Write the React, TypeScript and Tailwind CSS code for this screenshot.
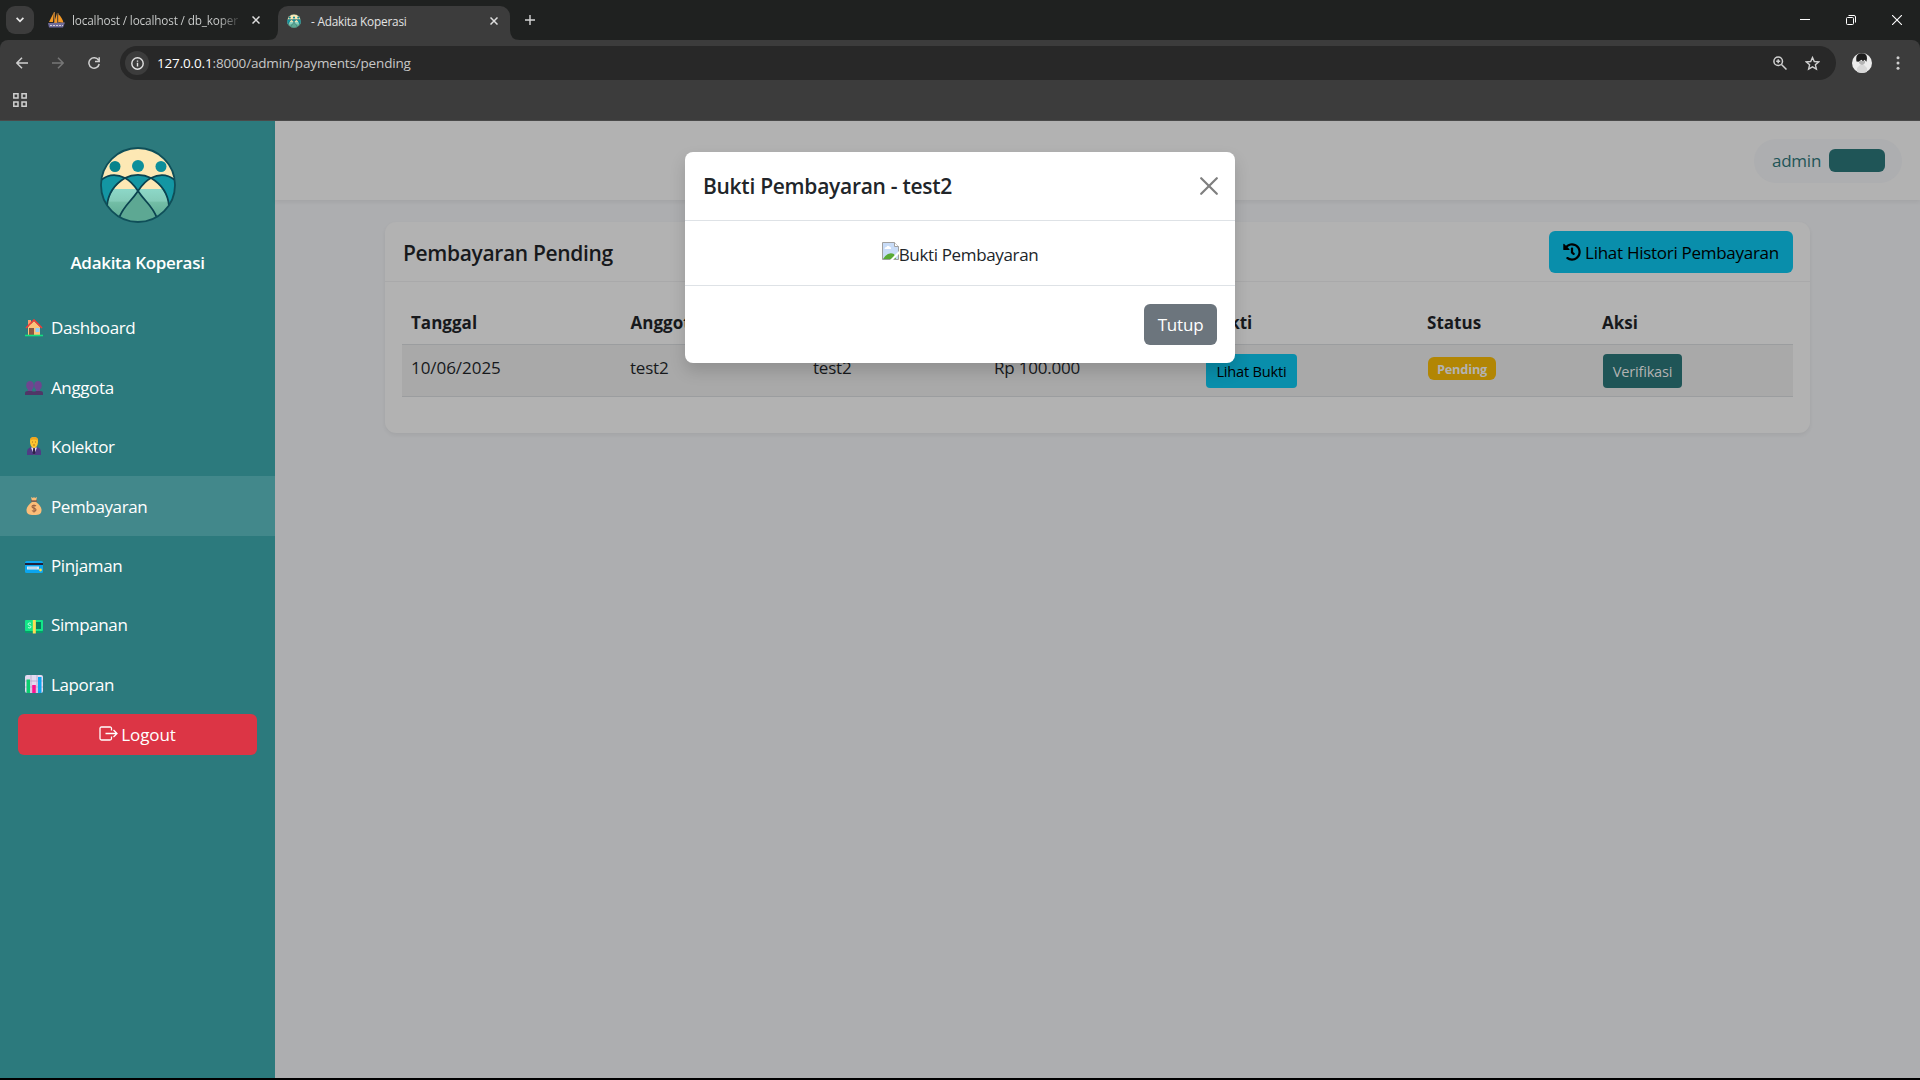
import React from "react";
import { FaHistory } from "react-icons/fa";

const columns = ["Tanggal", "Anggota", "Kolektor", "Jumlah", "Bukti", "Status", "Aksi"];

function Mark({ size }: { size: number }) {
  return (
    <svg width={size} height={size} viewBox="0 0 76 76" fill="none">
      <defs>
        <clipPath id={"disc" + size}><circle cx="38" cy="38" r="37" /></clipPath>
        <linearGradient id={"field" + size} x1="0" y1="0" x2="0" y2="1">
          <stop offset="0" stopColor="#8dd8c8" />
          <stop offset="0.35" stopColor="#84cbb8" />
          <stop offset="0.4" stopColor="#72bda5" />
          <stop offset="1" stopColor="#58a590" />
        </linearGradient>
      </defs>
      <g clipPath={`url(#disc${size})`}>
        <rect width="76" height="76" fill="#fde8b4" />
        <rect y="42" width="76" height="34" fill={`url(#field${size})`} />
        <path d="M0 33C8 27 17 27 25 31C15 38 9 47 7 58L0 54Z" fill="#1396a3" />
        <path d="M76 33C68 27 59 27 51 31C61 38 67 47 69 58L76 54Z" fill="#1396a3" />
        <path d="M25 31C33 27 43 27 51 31C46 34 41 39 38 44C35 39 30 34 25 31Z" fill="#1396a3" />
        <path d="M38 44C46 56 52 59 58 71L38 76L18 71C24 59 30 56 38 44Z" fill="#5da893" />
        <g stroke="#0b4350" strokeWidth="1.8">
          <path d="M0 34C9 26 17 27 25 31C31 34 34 38 38 44C46 56 52 58 57 71" />
          <path d="M76 34C67 26 59 27 51 31C45 34 42 38 38 44C30 56 24 58 19 71" />
          <path d="M7 59C8 46 15 37 25 31C33 27 43 27 51 31C61 37 68 46 69 59" />
        </g>
        <circle cx="15" cy="19.500" r="5.500" fill="#07838c" />
        <circle cx="38" cy="19" r="6" fill="#0d8f9b" />
        <circle cx="61" cy="19.500" r="5.500" fill="#0d8f9b" />
      </g>
      <circle cx="38" cy="38" r="37" stroke="#0f4f59" strokeWidth="1.800" />
    </svg>
  );
}

const emoji: Record<string, React.ReactNode> = {
  Dashboard: (
    <>
      <path d="M3 1h3v6H3z" fill="#f8a06b" />
      <path d="M3 8l6-6 6 6v8H3z" fill="#fcc27a" />
      <path d="M1 9l8-8 8 8" stroke="#f43b36" strokeWidth="1.600" fill="none" />
      <path d="M4 9h5v7H4z" fill="#8b5742" />
      <path d="M10.500 9h4v4h-4z" fill="#8fd0fb" />
      <path d="M0 16.500h18" stroke="#12e07f" strokeWidth="1.600" />
    </>
  ),
  Anggota: (
    <g fill="#6f4590">
      <ellipse cx="5" cy="7.500" rx="3.800" ry="4.500" />
      <ellipse cx="13" cy="7.500" rx="3.800" ry="4.500" />
      <path d="M3 10h4v4H3zM11 10h4v4h-4z" />
      <path d="M0 17v-2c0-2 2-2 5-2 2 0 3 .6 4 .6s2-.6 4-.6c3 0 5 0 5 2v2z" fill="#503667" />
    </g>
  ),
  Kolektor: (
    <>
      <path d="M2 18v-3c0-3 2-5 7-5s7 2 7 5v3z" fill="#503c86" />
      <path d="M6 10.500h6l-3 7.500z" fill="#e8e0f0" />
      <path d="M8.300 11h1.500l.7 5-1.500 2-1.500-2z" fill="#2d2248" />
      <path d="M5 4c0-3 1.500-4 4-4s4 1 4 4c0 4-1.500 7-4 7s-4-3-4-7z" fill="#fdc52e" />
      <path d="M5 3.500C5 1 6.500 0 9 0s4 1 4 3.500C10 2.500 8 2 5 3.500z" fill="#f0a51d" />
      <path d="M7 5h1M10 5h1M8 8h2" stroke="#9a5b20" strokeWidth=".8" />
    </>
  ),
  Pembayaran: (
    <>
      <path d="M6 0l2 1 1-1 1 1 2-1-1 4H7z" fill="#fcbd78" />
      <path d="M6 4h6" stroke="#8b5a45" strokeWidth="1.400" />
      <path d="M7 5h4c3 2 5.500 5 5.500 8 0 4-2 5-7.500 5s-7.500-1-7.500-5c0-3 2.500-6 5.500-8z" fill="#fcbd78" />
      <path d="M11 9c-1-1-4-1-4 .8 0 2 4 1 4 3 0 1.800-3 1.800-4 .7M9 7.500v8" stroke="#9b6242" strokeWidth="1.100" fill="none" />
    </>
  ),
  Pinjaman: (
    <>
      <rect y="5" width="18" height="12" rx="1.500" fill="#0ba5ef" />
      <path d="M0 7h18v2H0z" fill="#20203c" />
      <path d="M2 10.500h12v3H2z" fill="#d6eaf8" />
      <path d="M3 12h9" stroke="#9fb7d0" strokeWidth=".7" />
      <circle cx="15.500" cy="14" r="1.400" fill="#ffdf47" />
    </>
  ),
  Simpanan: (
    <>
      <rect y="4" width="18" height="13" rx="1" fill="#05a268" />
      <rect y="4" width="18" height="11" rx="1" fill="#12e688" />
      <path d="M11 6h5v7h-5z" fill="#077e5c" />
      <path d="M6 7.500C5 6.500 3 7 3 8.200 3 10 6 9 6 10.800c0 1.400-2 1.500-3 .6" stroke="#c9ffe4" fill="none" />
      <path d="M7.800 4h3v13.500h-3z" fill="#ffdd55" />
    </>
  ),
  Laporan: (
    <>
      <rect width="18" height="18" rx="2" fill="#e4daf0" />
      <path d="M0 6h18M0 12h18M6 0v18M12 0v18" stroke="#b7a9cc" strokeWidth=".8" />
      <path d="M1.500 4.500h3.500V18H1.500z" fill="#0ccf70" />
      <path d="M7.200 10h3.600v8H7.200z" fill="#fa1490" />
      <path d="M13 2h3.500v16H13z" fill="#0ca6f2" />
    </>
  ),
};

function X({ s = 8 }: { s?: number }) {
  return (
    <svg className="shrink-0" width={s} height={s} viewBox="0 0 8 8" stroke="#dedede" strokeWidth="1.500">
      <path d="M.5.5l7 7M7.500.5l-7 7" />
    </svg>
  );
}

function Browser() {
  return (
    <div className="h-[121px] shrink-0 bg-[#1f2120] font-['Open_Sans',sans-serif] text-[#e3e3e3]">
      <div className="flex h-10 items-end">
        <div className="mb-1.5 ml-1.5 flex h-7 w-7 shrink-0 items-center justify-center rounded-[9px] bg-[#3c3c3c]">
          <svg width="8" height="6" viewBox="0 0 8 6" fill="none" stroke="#e8e8e8" strokeWidth="1.700"><path d="M.6.8L4 4.300 7.400.8" /></svg>
        </div>
        <div className="flex h-10 w-[234px] shrink-0 items-center pl-[14px]">
          <svg className="shrink-0" width="17" height="16" viewBox="0 0 17 16">
            <path d="M6 0L1 10h4zM9 1L6 11l3 1zM10 2c3 2 5 6 5.500 9L10 10z" fill="#f59a25" />
            <path d="M6.500 0v10M10 1v10" stroke="#a8743c" />
            <path d="M0 11l17-.5-2 5H1z" fill="#6e6b99" />
            <path d="M2 13.500h13" stroke="#d6cfd4" strokeWidth="1.200" strokeDasharray="2 1" />
          </svg>
          <span className="ml-[7px] w-[172px] shrink-0 whitespace-nowrap bg-gradient-to-r from-[#d0d2d1] from-85% to-[#1f2120] bg-clip-text pt-[2px] text-[11.8px] tracking-[-0.17px] text-transparent">localhost / localhost / db_koper</span>
          <span className="ml-2"><X /></span>
        </div>
        <svg className="shrink-0" width="10" height="10" viewBox="0 0 10 10" fill="#3c3c3c"><path d="M0 10Q10 10 10 0V10z" /></svg>
        <div className="flex h-[34px] w-[232px] shrink-0 items-center rounded-t-[10px] bg-[#3c3c3c] pb-[5px] pl-[9px]">
          <Mark size={14} />
          <span className="ml-[10px] w-[179px] whitespace-nowrap pt-[2px] text-[11.800px] tracking-[-0.2px]">- Adakita Koperasi</span>
          <X />
        </div>
        <svg className="shrink-0" width="10" height="10" viewBox="0 0 10 10" fill="#3c3c3c"><path d="M10 10Q0 10 0 0V10z" /></svg>
        <svg className="mb-[15px] ml-[5px]" width="10" height="10" viewBox="0 0 10 10" stroke="#d5d5d5" strokeWidth="1.400"><path d="M0 5h10M5 0v10" /></svg>
        <div className="mr-[18px] ml-auto flex h-10 items-center gap-[36px]">
          <svg width="10" height="10" viewBox="0 0 10 10" stroke="#fff"><path d="M0 4.500h10" /></svg>
          <svg width="10" height="10" viewBox="0 0 10 10" fill="none" stroke="#fff"><rect x=".5" y="2.500" width="7" height="7" rx="1" /><path d="M2.500.5H8Q9.500.5 9.500 2v5.500" /></svg>
          <svg width="10" height="10" viewBox="0 0 10 10" stroke="#fff" strokeWidth="1.100"><path d="M0 0l10 10M10 0L0 10" /></svg>
        </div>
      </div>
      <div className="h-[81px] rounded-t-[8px] border-b border-[#4a4a4a] bg-[#3c3c3c] pt-1.5">
        <div className="flex h-[34px] items-center">
          <svg className="ml-4" width="12" height="12" viewBox="0 0 12 12" fill="none" stroke="#cfcfcf" strokeWidth="1.500"><path d="M12 6H1M6 .7L.8 6 6 11.300" /></svg>
          <svg className="ml-6" width="12" height="12" viewBox="0 0 12 12" fill="none" stroke="#777" strokeWidth="1.500"><path d="M0 6h11M6 .7L11.200 6 6 11.300" /></svg>
          <svg className="ml-[24px]" width="12" height="12" viewBox="0 0 12 12" fill="none" stroke="#cfcfcf" strokeWidth="1.500"><path d="M10.500 3.200A5.200 5.200 0 1 0 11.200 7M11.200.2v4.300H7" /></svg>
          <div className="ml-[20px] flex h-[34px] w-[1716px] items-center rounded-full bg-[#282828] pl-[5px]">
            <div className="flex h-6 w-6 items-center justify-center rounded-full bg-[#3c3c3c]">
              <svg width="13" height="13" viewBox="0 0 13 13" fill="none" stroke="#e3e3e3" strokeWidth="1.400"><circle cx="6.500" cy="6.500" r="5.700" /><path d="M6.500 5.800v3.700M6.500 3.400v1.300" /></svg>
            </div>
            <span className="ml-2 pt-px text-[13.500px] tracking-[-0.16px] text-[#c7c7c7]"><span className="text-white">127.0.0.1</span>:8000/admin/payments/pending</span>
            <svg className="ml-auto" width="14" height="14" viewBox="0 0 14 14" fill="none" stroke="#cfcfcf" strokeWidth="1.500"><circle cx="5.200" cy="5.200" r="4.300" /><path d="M8.500 8.500l5 5M3.200 5.200h4M5.200 3.200v4" /></svg>
            <svg className="mr-4 ml-[18px]" width="15" height="15" viewBox="0 0 15 15" fill="none" stroke="#cfcfcf" strokeWidth="1.400"><path d="M7.500 1.500l1.800 4 4.400.4-3.300 2.900 1 4.300-3.900-2.300-3.900 2.300 1-4.300-3.300-2.900 4.400-.4z" /></svg>
          </div>
          <svg className="ml-4" width="20" height="20" viewBox="0 0 20 20">
            <circle cx="10" cy="10" r="10" fill="#ececec" />
            <path d="M5 19v-4l3-3h4l3 3v4q-5 2-10 0" fill="#d8d8d8" />
            <path d="M4.500 8.500Q3 1 9 .3q6-.5 6 5l-.5 3.500-2-2-1.500 1.500-1.500-1.500-3 2z" fill="#1d1d1d" />
            <path d="M7 8h6v2q-3 4-6 0z" fill="#b5b5b5" />
          </svg>
          <svg className="ml-[24px]" width="4" height="14" viewBox="0 0 4 14" fill="#cfcfcf"><circle cx="2" cy="1.700" r="1.500" /><circle cx="2" cy="7" r="1.500" /><circle cx="2" cy="12.300" r="1.500" /></svg>
        </div>
        <svg className="mt-[13px] ml-[13px]" width="14" height="14" viewBox="0 0 14 14" fill="none" stroke="#cfcfcf" strokeWidth="1.500"><path d="M.8.800h4.200v4.200H.8zM9 .8h4.200v4.200H9zM.8 9h4.200v4.200H.8zM9 9h4.200v4.200H9z" /></svg>
      </div>
    </div>
  );
}

function Sidebar() {
  return (
    <aside className="w-[275px] shrink-0 bg-[#2c7a7d] text-white">
      <div className="flex flex-col items-center pt-[26px]">
        <Mark size={76} />
        <div className="mt-[27px] h-[26px] text-[17px] leading-[26px] font-semibold tracking-[-0.3px]">Adakita Koperasi</div>
      </div>
      <nav className="mt-[22px]">
        {Object.keys(emoji).map((label) => (
          <div key={label} className={"flex h-[59.400px] items-center pl-[25px] " + (label === "Pembayaran" ? "bg-[#42888b]" : "")}>
            <svg width="18" height="18" viewBox="0 0 18 18">{emoji[label]}</svg>
            <span className="ml-2 pt-px text-[17px] tracking-[-0.38px]">{label}</span>
          </div>
        ))}
      </nav>
      <div className="mx-[18px] flex h-[41px] items-center justify-center rounded-[6px] bg-[#dc3545] text-[17px] tracking-[-0.1px]">
        <svg className="mr-[3px]" width="19" height="16" viewBox="0 0 19 16" fill="none" stroke="#fff" strokeWidth="1.300"><path d="M12.500 4.500V2.500Q12.500 1 11 1H2.500Q1 1 1 2.500v10Q1 14 2.500 14H11q1.500 0 1.500-1.500v-2M6.500 7.500H18M14.500 4l3.500 3.500-3.500 3.500" /></svg>
        <span className="pt-px">Logout</span>
      </div>
    </aside>
  );
}

function Modal() {
  return (
    <div className="absolute top-[31px] left-[410px] flex h-[211px] w-[550px] flex-col rounded-[8px] bg-white text-[#212529] shadow-[0_8px_16px_rgba(0,0,0,0.15)]">
      <div className="flex h-[69px] items-center justify-between border-b border-[#dee2e6] pr-[17px] pl-[18px]">
        <h5 className="pt-[2px] text-[21px] font-semibold tracking-[-0.28px]">Bukti Pembayaran - test2</h5>
        <svg width="18" height="18" viewBox="0 0 18 18" stroke="#7f7f7f" strokeWidth="2.200" strokeLinecap="round"><path d="M1.200 1.200l15.600 15.600M16.800 1.200L1.200 16.800" /></svg>
      </div>
      <div className="flex h-[65px] items-center justify-center border-b border-[#dee2e6] pt-[3px] text-[17px] tracking-[-0.35px]">
        <svg className="mb-[8px]" width="17" height="18" viewBox="0 0 17 18">
          <path d="M.5.5h12l4 4V17.500H.5z" fill="#c8dcf8" stroke="#a0a0a0" />
          <path d="M2.500 7q0-2 2-2 1-2 3-.5 2 .5 1.500 2.500z" fill="#fff" />
          <path d="M1 17q5-8 11-5l2 5z" fill="#58aa36" />
          <path d="M12.500.5v4h4" fill="#fff" stroke="#a0a0a0" />
          <path d="M8 18l9-9v3l-6 6z" fill="#fff" />
        </svg>
        Bukti Pembayaran
      </div>
      <div className="flex flex-1 items-center justify-end pr-[18px]">
        <div className="mb-px flex h-[41px] w-[73px] items-center justify-center rounded-[6px] bg-[#6c757d] pt-px text-[17px] tracking-[-0.2px] text-white">Tutup</div>
      </div>
    </div>
  );
}

function Card() {
  return (
    <section className="ml-[110px] mt-[22px] h-[211px] w-[1425px] rounded-[11px] bg-[#b2b2b2] shadow-[0_2px_4px_rgba(0,0,0,0.06)]">
      <div className="flex h-[60px] items-center justify-between border-b border-[#a9a9aa] pr-[17px] pl-[18px]">
        <h4 className="pt-[4px] text-[21px] font-semibold tracking-[-0.35px]">Pembayaran Pending</h4>
        <div className="flex h-[42px] w-[244px] items-center justify-center gap-1 rounded-[6px] bg-[#098eab] pt-px text-[17px] tracking-[-0.28px] text-black">
          <FaHistory className="h-[18px] w-[18px]" />
          <span className="whitespace-nowrap pt-px">Lihat Histori Pembayaran</span>
        </div>
      </div>
      <div className="mx-[17px] pt-[18px]">
        <div className="grid h-[45px] grid-cols-[219.5px_183px_181px_212px_220.5px_175px_1fr] items-center border-b border-[#9b9d9f] pt-px pl-[9px] text-[17px] font-bold tracking-[0.02px]">
          {columns.map((c) => <span key={c}>{c}</span>)}
        </div>
        <div className="grid h-[52px] grid-cols-[219px_183px_181px_212px_222px_175px_1fr] border-b border-[#9b9d9f] bg-[#a9a9a9] pt-[9px] pl-[9px] text-[17px] leading-[28px] tracking-[-0.2px]">
          <span className="tracking-[-0.05px]">10/06/2025</span>
          <span>test2</span>
          <span>test2</span>
          <span>Rp 100.000</span>
          <span><span className="flex h-[34px] w-[91px] items-center justify-center rounded-[4px] bg-[#098eab] text-[14.600px] text-black">Lihat Bukti</span></span>
          <span><span className="mt-[3px] flex h-[23px] w-[68px] items-center justify-center rounded-[6px] bg-[#b28604] pt-px text-[12.800px] font-bold text-[#b2b2b2]">Pending</span></span>
          <span><span className="flex h-[34px] w-[79px] items-center justify-center rounded-[4px] bg-[#1f5557] text-[14.600px] text-[#b2b2b2]">Verifikasi</span></span>
        </div>
      </div>
    </section>
  );
}

export default function App() {
  return (
    <div className="flex h-[1080px] w-[1920px] flex-col overflow-hidden border-b-2 border-black">
      <Browser />
      <div className="flex min-h-0 flex-1 font-['Open_Sans',sans-serif]">
        <Sidebar />
        <main className="relative flex-1 bg-[#adaeb0] text-[#17191c]">
          <header className="flex h-[79px] items-center justify-end bg-[#b2b2b2] pr-[18px] pt-px shadow-[0_2px_4px_rgba(0,0,0,0.06)]">
            <div className="flex h-[44px] w-[148px] items-center rounded-full bg-[#adaeb0] pl-[18px] text-[17px] tracking-[-0.25px] text-[#1f5557]">
              <span className="w-[57px]">admin</span>
              <span className="mb-px h-[23px] w-[56px] rounded-[6px] bg-[#1f5557]" />
            </div>
          </header>
          <Card />
          <Modal />
        </main>
      </div>
    </div>
  );
}
